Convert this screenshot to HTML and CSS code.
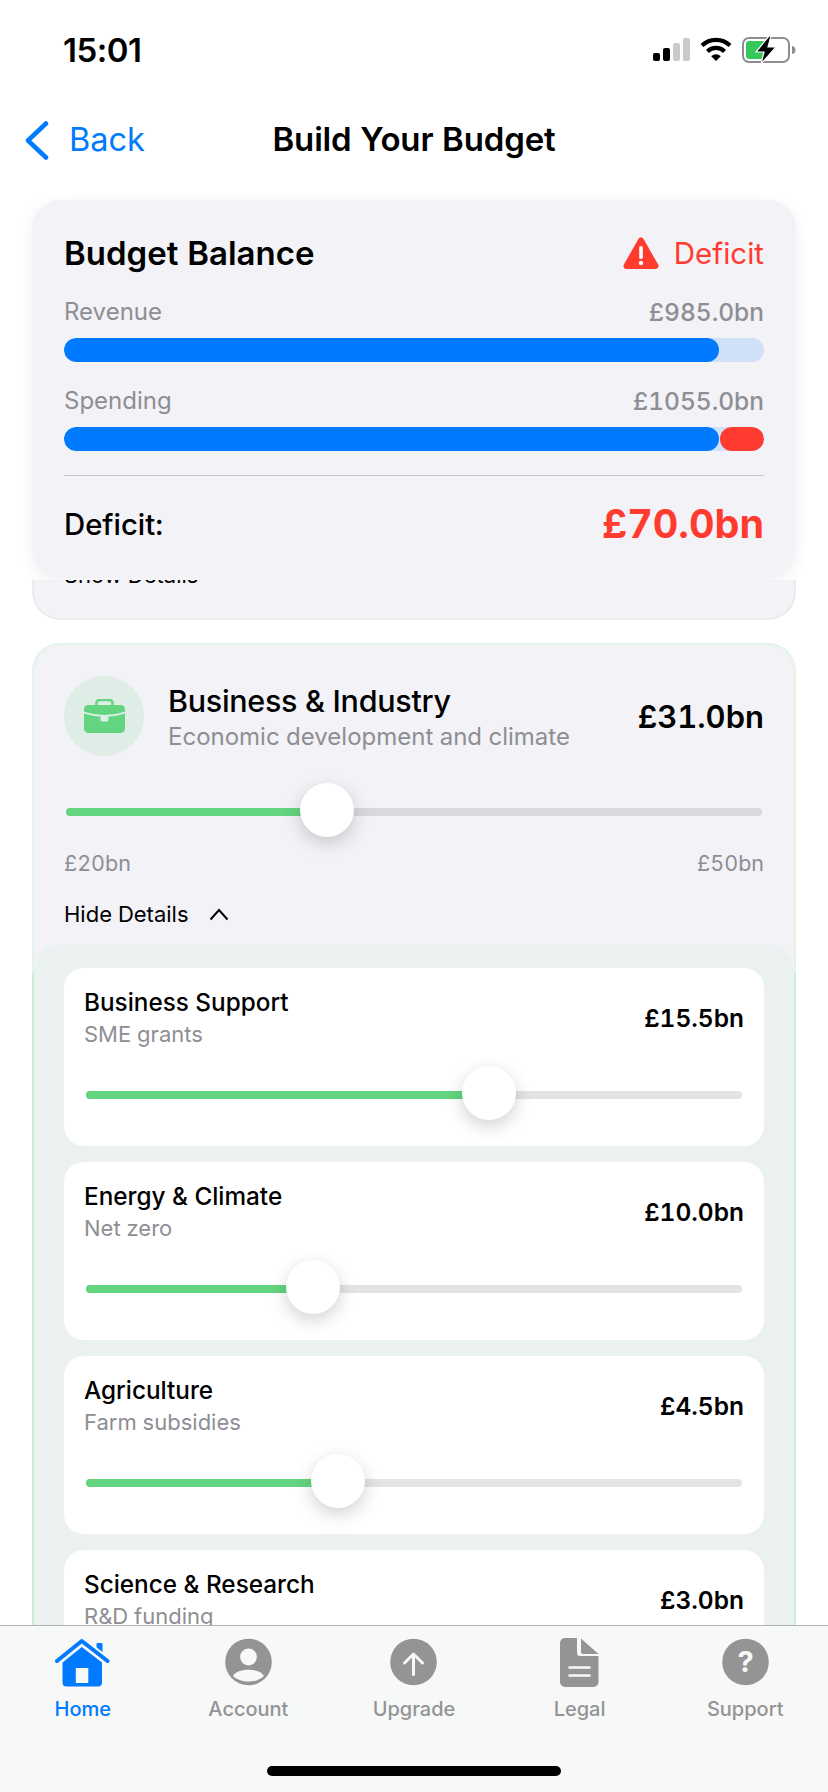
FILE: index.html
```html
<!DOCTYPE html>
<html lang="en">
<head>
    <meta charset="UTF-8">
    <meta name="viewport" content="width=device-width, initial-scale=1.0">
    <title>Build Your Budget</title>
    <link rel="stylesheet" href="styles.css">
</head>
<body>
    <div class="screen">
        <div class="status-bar">
            <span class="time">15:01</span>
            <div class="status-icons">
                <svg class="signal" width="37" height="24" viewBox="0 0 37 24">
                    <rect x="0" y="15" width="7" height="8" rx="2" fill="#000"/>
                    <rect x="10" y="10" width="7" height="13" rx="2" fill="#000"/>
                    <rect x="20" y="5" width="7" height="18" rx="2" fill="#c9c9c9"/>
                    <rect x="30" y="0" width="7" height="23" rx="2" fill="#c9c9c9"/>
                </svg>
                <svg class="wifi" width="32" height="25" viewBox="0 0 32 25">
                    <path d="M2 9.500A20 20 0 0 1 30 9.500" fill="none" stroke="#000" stroke-width="4.200"/>
                    <path d="M7.500 15.500A12 12 0 0 1 24.500 15.500" fill="none" stroke="#000" stroke-width="4.200"/>
                    <path d="M16 25L11.200 20.200A7 7 0 0 1 20.800 20.200Z" fill="#000"/>
                </svg>
                <svg class="battery" width="54" height="28" viewBox="0 0 54 28">
                    <rect x="1" y="2" width="46" height="24" rx="6" fill="none" stroke="#8e8e8e" stroke-width="2"/>
                    <rect x="4" y="5" width="20" height="18" rx="3" fill="#34c759"/>
                    <path d="M50 10c2 0 3.500 2 3.500 4s-1.500 4-3.500 4Z" fill="#8e8e8e"/>
                    <path d="M27 0L14 16h8l-3 12 15-17h-8l3-11Z" fill="#000" stroke="#fff" stroke-width="1.200"/>
                </svg>
            </div>
        </div>

        <div class="nav-bar">
            <div class="back">
                <svg width="25" height="39" viewBox="0 0 25 39">
                    <path d="M22 2.500L4 19.500L22 36.500" fill="none" stroke="#007aff" stroke-width="4.500" stroke-linecap="round" stroke-linejoin="round"/>
                </svg>
                <span>Back</span>
            </div>
            <h1 class="nav-title">Build Your Budget</h1>
        </div>

        <div class="content">
            <div class="summary-wrap">
                <div class="summary">
                    <div class="summary-head">
                        <h2>Budget Balance</h2>
                        <div class="status-flag">
                            <svg width="36" height="33" viewBox="0 0 36 33">
                                <path d="M18 3.500L32.500 29H3.500Z" fill="#ff3b30" stroke="#ff3b30" stroke-width="6" stroke-linejoin="round"/>
                                <rect x="16.200" y="9" width="3.600" height="13" rx="1.800" fill="#fff"/>
                                <circle cx="18" cy="26" r="2.200" fill="#fff"/>
                            </svg>
                            <span>Deficit</span>
                        </div>
                    </div>

                    <div class="meter-label"><span>Revenue</span><span class="meter-value">£985.0bn</span></div>
                    <div class="meter">
                        <div class="meter-fill" style="width: 93.5%"></div>
                    </div>

                    <div class="meter-label"><span>Spending</span><span class="meter-value">£1055.0bn</span></div>
                    <div class="meter">
                        <div class="meter-fill" style="width: 93.5%"></div>
                        <div class="meter-over"></div>
                    </div>

                    <div class="summary-foot">
                        <span class="foot-label">Deficit:</span>
                        <span class="foot-value">£70.0bn</span>
                    </div>
                </div>
            </div>

            <div class="card-tail">
                <div class="toggle">Show Details</div>
            </div>

            <div class="category">
                <div class="category-main">
                    <div class="category-head">
                        <div class="category-icon">
                            <svg width="41" height="34" viewBox="0 0 41 34">
                                <path d="M12.500 7V4a3 3 0 0 1 3-3h10a3 3 0 0 1 3 3v3" fill="none" stroke="#63d47f" stroke-width="2.600"/>
                                <rect x="0" y="6" width="41" height="28" rx="4.500" fill="#63d47f"/>
                                <path d="M0 13.500Q20.500 20.500 41 13.500" fill="none" stroke="#deede6" stroke-width="1.800"/>
                                <rect x="16.500" y="17" width="8" height="5.500" rx="1.500" fill="#deede6"/>
                            </svg>
                        </div>
                        <div class="category-text">
                            <div class="category-title">Business &amp; Industry</div>
                            <div class="category-sub">Economic development and climate</div>
                        </div>
                        <div class="category-value">£31.0bn</div>
                    </div>

                    <div class="slider slider-main">
                        <div class="slider-fill" style="width: 37.5%"><span class="thumb"></span></div>
                    </div>
                    <div class="range"><span>£20bn</span><span>£50bn</span></div>

                    <div class="toggle toggle-open">
                        Hide Details
                        <svg width="20" height="13" viewBox="0 0 20 13">
                            <path d="M1.500 11.500L10 2L18.500 11.500" fill="none" stroke="#000" stroke-width="2"/>
                        </svg>
                    </div>
                </div>

                <div class="details">
                    <div class="item">
                        <div class="item-head">
                            <div>
                                <div class="item-title">Business Support</div>
                                <div class="item-sub">SME grants</div>
                            </div>
                            <div class="item-value">£15.5bn</div>
                        </div>
                        <div class="slider"><div class="slider-fill" style="width: 61.4%"><span class="thumb"></span></div></div>
                    </div>
                    <div class="item">
                        <div class="item-head">
                            <div>
                                <div class="item-title">Energy &amp; Climate</div>
                                <div class="item-sub">Net zero</div>
                            </div>
                            <div class="item-value">£10.0bn</div>
                        </div>
                        <div class="slider"><div class="slider-fill" style="width: 34.6%"><span class="thumb"></span></div></div>
                    </div>
                    <div class="item">
                        <div class="item-head">
                            <div>
                                <div class="item-title">Agriculture</div>
                                <div class="item-sub">Farm subsidies</div>
                            </div>
                            <div class="item-value">£4.5bn</div>
                        </div>
                        <div class="slider"><div class="slider-fill" style="width: 38.4%"><span class="thumb"></span></div></div>
                    </div>
                    <div class="item">
                        <div class="item-head">
                            <div>
                                <div class="item-title">Science &amp; Research</div>
                                <div class="item-sub">R&amp;D funding</div>
                            </div>
                            <div class="item-value">£3.0bn</div>
                        </div>
                    </div>
                </div>
            </div>
        </div>

        <div class="tab-bar">
            <div class="tabs">
                <div class="tab tab-active">
                    <svg width="55" height="48" viewBox="0 0 55 48">
                        <rect x="41.500" y="4.500" width="6" height="14" rx="1" fill="#007aff"/>
                        <path d="M26.800 8.500L47 24V44a4 4 0 0 1-4 4H11.500a4 4 0 0 1-4-4V24Z" fill="#007aff"/>
                        <path d="M2 22.500L26.800 2.500L52.500 22.500" fill="none" stroke="#f7f8f8" stroke-width="8" stroke-linecap="round" stroke-linejoin="round"/>
                        <path d="M2 22.500L26.800 2.500L52.500 22.500" fill="none" stroke="#007aff" stroke-width="4" stroke-linecap="round" stroke-linejoin="round"/>
                        <rect x="20.800" y="29.500" width="12.500" height="15" fill="#f7f8f8"/>
                    </svg>
                    <span>Home</span>
                </div>
                <div class="tab">
                    <svg width="47" height="48" viewBox="0 0 47 48">
                        <circle cx="23.500" cy="23.500" r="23.300" fill="#949494"/>
                        <circle cx="23.500" cy="18.500" r="8.400" fill="#f7f8f8"/>
                        <path d="M8 37.500C10.500 33.500 16 31.300 23.500 31.300S36.500 33.500 39 37.500C35.500 41 29.500 43 23.500 43S11.500 41 8 37.500Z" fill="#f7f8f8"/>
                    </svg>
                    <span>Account</span>
                </div>
                <div class="tab">
                    <svg width="47" height="48" viewBox="0 0 47 48">
                        <circle cx="23.500" cy="23.500" r="23.300" fill="#949494"/>
                        <path d="M23.500 36V16M14.500 24.500L23.500 15.500L32.500 24.500" fill="none" stroke="#f7f8f8" stroke-width="3" stroke-linecap="round" stroke-linejoin="round"/>
                    </svg>
                    <span>Upgrade</span>
                </div>
                <div class="tab">
                    <svg width="39" height="49" viewBox="0 0 39 49">
                        <path d="M5 0H17V15a3 3 0 0 0 3 3H38.500V44a5 5 0 0 1-5 5H5a5 5 0 0 1-5-5V5a5 5 0 0 1 5-5Z" fill="#949494"/>
                        <path d="M21 0.500L38.500 16H23a2 2 0 0 1-2-2Z" fill="#949494"/>
                        <path d="M9.500 29.500H29.500M9.500 37.500H29.500" fill="none" stroke="#f7f8f8" stroke-width="2.500" stroke-linecap="round"/>
                    </svg>
                    <span>Legal</span>
                </div>
                <div class="tab">
                    <svg width="47" height="48" viewBox="0 0 47 48">
                        <circle cx="23.500" cy="23.500" r="23.300" fill="#949494"/>
                        <text x="23.500" y="33" class="help-mark">?</text>
                    </svg>
                    <span>Support</span>
                </div>
            </div>
            <div class="home-indicator"></div>
        </div>
    </div>
</body>
</html>
```

FILE: styles.css
```css
* {
    box-sizing: border-box;
}

html, body {
    margin: 0;
    padding: 0;
}

body {
    font-family: 'Inter', 'Liberation Sans', sans-serif;
    font-variant-numeric: tabular-nums;
    background-color: #fff;
    color: #000;
}

.screen {
    display: flex;
    flex-direction: column;
    width: 828px;
    height: 1792px;
    overflow: hidden;
}

/* Status bar */
.status-bar {
    display: flex;
    justify-content: space-between;
    flex: 0 0 100px;
    padding: 36px 32px 0 63px;
}

.time {
    font-size: 33px;
    line-height: 28px;
    font-weight: 600;
    font-variant-numeric: normal;
    letter-spacing: -0.5px;
}

.status-icons {
    display: flex;
    align-items: flex-start;
    gap: 10px;
    height: 28px;
}

.signal {
    margin-top: 2px;
}

/* Nav */
.nav-bar {
    position: relative;
    display: flex;
    align-items: center;
    justify-content: center;
    flex: 0 0 82px;
    padding-bottom: 4px;
}

.back {
    position: absolute;
    left: 24px;
    top: 20px;
    display: flex;
    align-items: center;
    gap: 20px;
    color: #007aff;
    font-size: 32.5px;
    line-height: 40px;
}

.nav-title {
    margin: 0;
    font-size: 33px;
    font-weight: 600;
    letter-spacing: -0.15px;
}

.content {
    flex: 1;
    min-height: 0;
    overflow: hidden;
}

/* Budget summary */
.summary-wrap {
    height: 398px;
    padding: 18px 32px 0;
    overflow: hidden;
    background-color: #fff;
}

.summary {
    height: 378px;
    padding: 32px 32px 0;
    border-radius: 28px;
    background-color: #f2f2f7;
    box-shadow: 0 4px 16px rgba(0, 0, 0, 0.06);
}

.summary-head {
    display: flex;
    align-items: center;
    justify-content: space-between;
    height: 42px;
    margin-bottom: 23px;
}

.summary-head h2 {
    margin: 0;
    font-size: 33px;
    font-weight: 600;
}

.status-flag {
    display: flex;
    align-items: center;
    gap: 15px;
    color: #ff3b30;
    font-size: 29.5px;
}

.meter-label {
    display: flex;
    justify-content: space-between;
    height: 30px;
    margin-bottom: 11px;
    color: #8e8e93;
    font-size: 24px;
    line-height: 30px;
}

.meter-value {
    font-size: 24.5px;
    font-weight: 500;
}

.meter {
    display: flex;
    height: 24px;
    margin-bottom: 24px;
    border-radius: 12px;
    background-color: #cfe0f7;
    overflow: hidden;
}

.meter-fill {
    border-radius: 12px;
    background-color: #007aff;
}

.meter-over {
    flex: 1;
    margin-left: 1px;
    border-radius: 12px;
    background-color: #ff3b30;
}

.summary-foot {
    position: relative;
    display: flex;
    align-items: center;
    justify-content: space-between;
    height: 50px;
    margin-top: 48px;
}

.summary-foot::before {
    content: "";
    position: absolute;
    left: 0;
    right: 0;
    top: -24px;
    height: 1px;
    background-color: #c6c6c8;
}

.foot-label {
    font-size: 29.3px;
    font-weight: 500;
}

.foot-value {
    color: #ff3b30;
    font-size: 39.5px;
    font-weight: 700;
}

/* Collapsed card, mostly behind the summary */
.card-tail {
    height: 40px;
    margin: 0 32px 23px;
    padding: 0 30px;
    border: 2px solid #e9ecea;
    border-top: 0;
    border-radius: 0 0 28px 28px;
    background-color: #f2f2f7;
    overflow: hidden;
}

.card-tail .toggle {
    margin-top: -20px;
}

.toggle {
    font-size: 22px;
    line-height: 30px;
}

/* Expanded category */
.category {
    margin: 0 32px;
    border: 2px solid #e2f4e7;
    border-radius: 28px;
    background-color: #f2f2f7;
}

.category-main {
    padding: 31px 30px 0;
}

.category-head {
    display: flex;
    height: 80px;
}

.category-icon {
    display: flex;
    align-items: center;
    justify-content: center;
    flex: 0 0 80px;
    height: 80px;
    margin-right: 24px;
    border-radius: 50%;
    background-color: #deede6;
}

.category-text {
    flex: 1;
    padding-top: 6px;
}

.category-title {
    font-size: 30.5px;
    line-height: 38px;
    font-weight: 500;
    letter-spacing: -0.3px;
}

.category-sub {
    color: #8e8e93;
    font-size: 24px;
    line-height: 34px;
}

.category-value {
    align-self: center;
    font-size: 31px;
    font-weight: 600;
}

.slider {
    height: 8px;
    border-radius: 4px;
    background-color: #e4e4e6;
}

.slider-main {
    margin: 52px 2px 0;
    background-color: #d8d8de;
}

.slider-fill {
    position: relative;
    height: 8px;
    border-radius: 4px 0 0 4px;
    background-color: #63d47f;
}

.thumb {
    position: absolute;
    right: -27px;
    top: -25px;
    width: 54px;
    height: 54px;
    border-radius: 50%;
    background-color: #fff;
    box-shadow: 0 6px 18px rgba(0, 0, 0, 0.18);
}

.range {
    display: flex;
    justify-content: space-between;
    margin-top: 33px;
    color: #8e8e93;
    font-size: 21.5px;
    line-height: 28px;
}

.toggle-open {
    display: flex;
    align-items: center;
    gap: 20px;
    margin-top: 22px;
}

.details {
    display: flex;
    flex-direction: column;
    gap: 16px;
    margin-top: 15px;
    padding: 24px 30px;
    border-radius: 28px 28px 0 0;
    background-color: #ebf0f0;
    box-shadow: -2px 8px 0 #c9ecd4, 2px 8px 0 #c9ecd4;
}

.item {
    height: 178px;
    padding: 17px 20px 0;
    border-radius: 20px;
    background-color: #fff;
}

.item-head {
    display: flex;
    align-items: center;
    justify-content: space-between;
    height: 64px;
    margin-bottom: 42px;
}

.item-title {
    font-size: 24.3px;
    line-height: 33px;
    font-weight: 500;
}

.item-sub {
    color: #8e8e93;
    font-size: 22px;
    line-height: 30px;
}

.item-value {
    padding-top: 2px;
    font-size: 24.5px;
    font-weight: 600;
}

.item .slider {
    margin: 0 2px;
}

/* Tab bar */
.tab-bar {
    display: flex;
    flex-direction: column;
    flex: 0 0 167px;
    border-top: 1px solid #b2b2b2;
    background-color: #f7f8f8;
}

.tabs {
    display: grid;
    grid-template-columns: repeat(5, 1fr);
    padding-top: 12px;
}

.tab {
    display: flex;
    flex-direction: column;
    align-items: center;
    color: #949494;
    font-size: 20px;
    line-height: 24px;
    font-weight: 500;
}

.tab svg {
    height: 49px;
    margin-bottom: 10px;
}

.tab-active {
    color: #007aff;
}

.help-mark {
    fill: #f7f8f8;
    font-family: 'Inter', sans-serif;
    font-size: 29px;
    font-weight: 700;
    text-anchor: middle;
}

.home-indicator {
    width: 294px;
    height: 10px;
    margin: auto auto 16px;
    border-radius: 5px;
    background-color: #000;
}
```
